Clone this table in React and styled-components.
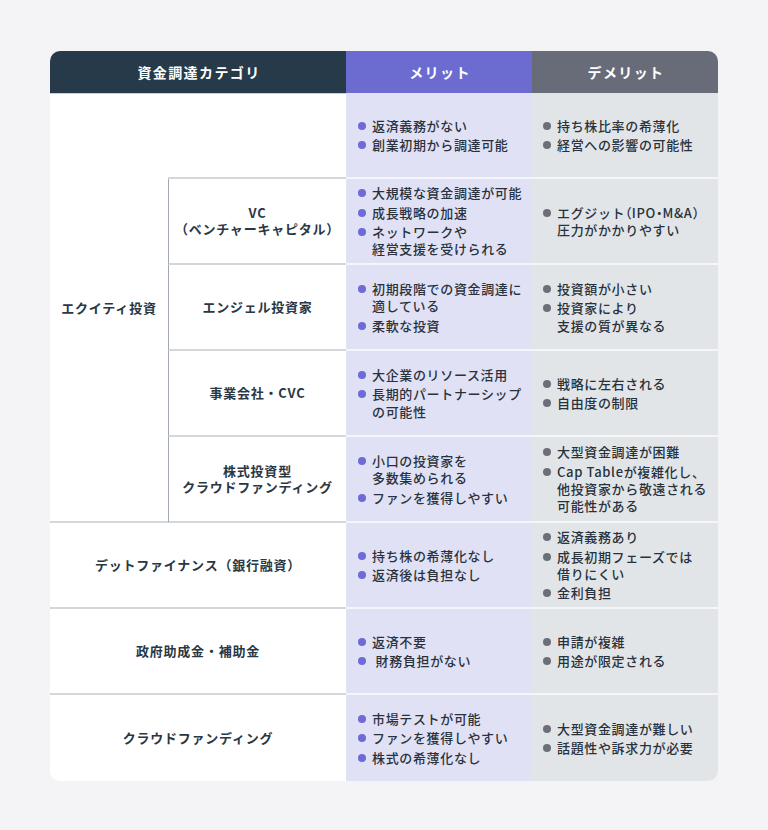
import React from "react";
import styled, { createGlobalStyle } from "styled-components";

const GlobalStyle = createGlobalStyle`
  html, body {
    margin: 0;
    padding: 0;
    background: #f4f4f7;
  }
  body {
    font-family: "Noto Sans CJK JP", "Noto Sans", sans-serif;
    color: #2b3540;
  }
`;

const rows = [
  {
    merits: ["返済義務がない", "創業初期から調達可能"],
    demerits: ["持ち株比率の希薄化", "経営への影響の可能性"],
  },
  {
    sub: "VC\n（ベンチャーキャピタル）",
    merits: ["大規模な資金調達が可能", "成長戦略の加速", "ネットワークや\n経営支援を受けられる"],
    demerits: ["エグジット（IPO・M&A）\n圧力がかかりやすい"],
  },
  {
    sub: "エンジェル投資家",
    merits: ["初期段階での資金調達に\n適している", "柔軟な投資"],
    demerits: ["投資額が小さい", "投資家により\n支援の質が異なる"],
  },
  {
    sub: "事業会社・CVC",
    merits: ["大企業のリソース活用", "長期的パートナーシップ\nの可能性"],
    demerits: ["戦略に左右される", "自由度の制限"],
  },
  {
    sub: "株式投資型\nクラウドファンディング",
    merits: ["小口の投資家を\n多数集められる", "ファンを獲得しやすい"],
    demerits: ["大型資金調達が困難", "Cap Tableが複雑化し、\n他投資家から敬遠される\n可能性がある"],
  },
];

const others = [
  {
    label: "デットファイナンス（銀行融資）",
    merits: ["持ち株の希薄化なし", "返済後は負担なし"],
    demerits: ["返済義務あり", "成長初期フェーズでは\n借りにくい", "金利負担"],
  },
  {
    label: "政府助成金・補助金",
    merits: ["返済不要", " 財務負担がない"],
    demerits: ["申請が複雑", "用途が限定される"],
  },
  {
    label: "クラウドファンディング",
    merits: ["市場テストが可能", "ファンを獲得しやすい", "株式の希薄化なし"],
    demerits: ["大型資金調達が難しい", "話題性や訴求力が必要"],
  },
];

// full-width brackets and middle dots inside list text are set half width
const tighten = (text) =>
  text.split(/([（）・])/).map((part, i) =>
    /^[（）・]$/.test(part) ? <Punct key={i}>{part}</Punct> : part
  );

const List = ({ items, tone }) => (
  <ItemList>
    {items.map((t) => (
      <Item key={t}>
        <Dot $tone={tone} />
        <span>{tighten(t)}</span>
      </Item>
    ))}
  </ItemList>
);

export default function App() {
  return (
    <Page>
      <GlobalStyle />
      <Table>
        <HeadCell $bg="#263a4a" $span={2}>資金調達カテゴリ</HeadCell>
        <HeadCell $bg="#6c6bd0">メリット</HeadCell>
        <HeadCell $bg="#686c78">デメリット</HeadCell>

        <GroupCell>エクイティ投資</GroupCell>
        {rows.map((r, i) => (
          <React.Fragment key={i}>
            <SubCell $first={i === 0}>{r.sub}</SubCell>
            <BodyCell $tone="merit">
              <List items={r.merits} tone="merit" />
            </BodyCell>
            <BodyCell $tone="demerit">
              <List items={r.demerits} tone="demerit" />
            </BodyCell>
          </React.Fragment>
        ))}

        {others.map((r, i) => (
          <React.Fragment key={r.label}>
            <LabelCell $last={i === others.length - 1}>{r.label}</LabelCell>
            <BodyCell $tone="merit" $last={i === others.length - 1}>
              <List items={r.merits} tone="merit" />
            </BodyCell>
            <BodyCell $tone="demerit" $last={i === others.length - 1}>
              <List items={r.demerits} tone="demerit" />
            </BodyCell>
          </React.Fragment>
        ))}
      </Table>
    </Page>
  );
}

const Page = styled.div`
  padding: 51px 50px 49px;
  background: #f4f4f7;
`;

const Table = styled.div`
  display: grid;
  grid-template-columns: 118px 178px 186px 186px;
  grid-template-rows: 42px repeat(8, 86px);
  background: #fff;
  border-radius: 10px;
  overflow: hidden;
`;

const HeadCell = styled.div`
  grid-column: span ${(p) => p.$span || 1};
  display: flex;
  align-items: center;
  justify-content: center;
  background: ${(p) => p.$bg};
  color: #fff;
  font-size: 14px;
  font-weight: 700;
  letter-spacing: 0.1em;
  padding-left: 2px;
`;

const labelText = `
  display: flex;
  align-items: center;
  justify-content: center;
  text-align: center;
  font-size: 13px;
  font-weight: 700;
  line-height: 1.2;
  letter-spacing: 0.06em;
  color: #2a3744;
  white-space: pre;
  box-sizing: border-box;
`;

const GroupCell = styled.div`
  ${labelText}
  grid-column: 1;
  grid-row: 2 / span 5;
  border-top: 1px solid #c9ced4;
  border-bottom: 2px solid #d3d7dc;
`;

const SubCell = styled.div`
  ${labelText}
  grid-column: 2;
  border-top: ${(p) => (p.$first ? "1px solid #c9ced4" : "none")};
  border-left: ${(p) => (p.$first ? "none" : "1px solid #a2a8b0")};
  border-bottom: 2px solid #d3d7dc;
`;

const LabelCell = styled.div`
  ${labelText}
  grid-column: 1 / span 2;
  border-bottom: ${(p) => (p.$last ? "none" : "2px solid #d3d7dc")};
`;

const BodyCell = styled.div`
  display: flex;
  align-items: center;
  box-sizing: border-box;
  padding: 0 4px 0 12px;
  background: ${(p) => (p.$tone === "merit" ? "#e1e1f6" : "#e2e5e8")};
  border-bottom: ${(p) => (p.$last ? "none" : "2px solid rgba(255, 255, 255, 0.65)")};
  ${(p) => (p.$tone === "demerit" ? "padding-left: 11px;" : "")}
`;

const ItemList = styled.ul`
  list-style: none;
  margin: 0;
  padding: 0;
  display: flex;
  flex-direction: column;
  gap: 2px;
`;

const Item = styled.li`
  display: flex;
  align-items: flex-start;
  font-size: 13px;
  font-weight: 500;
  line-height: 17.3px;
  letter-spacing: 0.05em;
  color: #29323c;
  white-space: pre;
`;

const Punct = styled.span`
  font-feature-settings: "halt";
  letter-spacing: 0;
`;

const Dot = styled.i`
  flex: none;
  width: 8px;
  height: 8px;
  margin: 5px 6px 0 0;
  border-radius: 50%;
  background: ${(p) => (p.$tone === "merit" ? "#6e6ad6" : "#6c6f78")};
`;
